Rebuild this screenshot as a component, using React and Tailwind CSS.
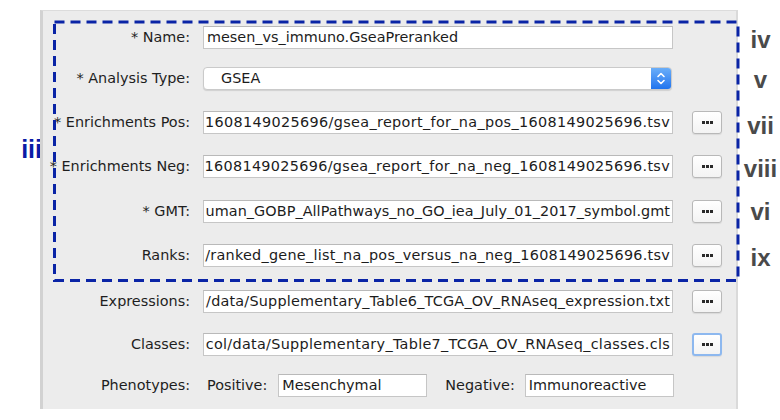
import React from 'react'

const FIELD_ROWS = [
  { label: '* Name:', value: 'mesen_vs_immuno.GseaPreranked', left: true, mt: 'mt-[15px]' },
  { label: '* Analysis Type:', select: 'GSEA', mt: 'mt-[18px]' },
  { label: '* Enrichments Pos:', value: '1608149025696/gsea_report_for_na_pos_1608149025696.tsv', track: 'tracking-[0.34px]', button: true, mt: 'mt-[21px]' },
  { label: '* Enrichments Neg:', value: '1608149025696/gsea_report_for_na_neg_1608149025696.tsv', track: 'tracking-[0.32px]', button: true, mt: 'mt-[21px]' },
  { label: '* GMT:', value: 'uman_GOBP_AllPathways_no_GO_iea_July_01_2017_symbol.gmt', track: 'tracking-[0.06px]', button: true, mt: 'mt-[22px]' },
  { label: 'Ranks:', value: '/ranked_gene_list_na_pos_versus_na_neg_1608149025696.tsv', track: 'tracking-[0.26px]', button: true, mt: 'mt-[21px]' },
  { label: 'Expressions:', value: '/data/Supplementary_Table6_TCGA_OV_RNAseq_expression.txt', track: 'tracking-[0.2px]', button: true, mt: 'mt-[23px]' },
  { label: 'Classes:', value: 'col/data/Supplementary_Table7_TCGA_OV_RNAseq_classes.cls', track: 'tracking-[0.3px]', button: true, focused: true, mt: 'mt-[20px]' },
]

const NUMERALS = [
  { text: 'iv', mt: 'mt-[25px]' },
  { text: 'v', mt: 'mt-[10px]' },
  { text: 'vii', mt: 'mt-[16px]' },
  { text: 'viii', mt: 'mt-[13px]' },
  { text: 'vi', mt: 'mt-[13px]' },
  { text: 'ix', mt: 'mt-[16px]' },
]

function DotsButton({ focused }) {
  return (
    <div
      className={
        'ml-[19px] w-[30px] h-[23px] rounded-[3px] bg-gradient-to-b from-white to-[#f3f3f3] flex items-center justify-center gap-[1px] shadow-[0_1px_1px_rgba(0,0,0,0.08)] ' +
        (focused ? 'border-2 border-[#8db8ef]' : 'border border-[#b8b8b8]')
      }
    >
      <span className="w-[3px] h-[3px] bg-[#2a2a2a]" />
      <span className="w-[3px] h-[3px] bg-[#2a2a2a]" />
      <span className="w-[3px] h-[3px] bg-[#2a2a2a]" />
    </div>
  )
}

function TextField({ value, left, track = '', width = 'w-[470px]' }) {
  return (
    <div
      className={
        width +
        ' h-[23px] bg-white border border-[#c6c6c6] border-t-[#b9b9b9] overflow-hidden flex items-center ' +
        (left ? 'justify-start pl-[3px]' : 'justify-end pr-[2px]')
      }
    >
      <span className={'shrink-0 whitespace-nowrap text-[#1c1c1c] ' + track}>{value}</span>
    </div>
  )
}

function Select({ value }) {
  return (
    <div className="w-[469px] h-[23px] rounded-[4px] bg-white border border-[#cacaca] shadow-[0_1px_1px_rgba(0,0,0,0.12)] flex items-center overflow-hidden">
      <span className="flex-1 pl-[17px] text-[#1c1c1c]">{value}</span>
      <div className="w-[20px] h-full bg-gradient-to-b from-[#6aaef9] to-[#1f74ee] flex items-center justify-center">
        <svg width="10" height="15" viewBox="0 0 10 15" fill="none" stroke="white" strokeWidth="1.6" strokeLinecap="round" strokeLinejoin="round">
          <path d="M2 5.5 L5 2.5 L8 5.5" />
          <path d="M2 9.5 L5 12.5 L8 9.5" />
        </svg>
      </div>
    </div>
  )
}

export default function App() {
  return (
    <div className="relative w-[780px] h-[420px] bg-white flex font-['DejaVu_Sans',sans-serif] text-[14.4px] text-[#1e1e1e]">
      {/* left annotation */}
      <div className="w-[40px] flex flex-col items-end">
        <span className="mt-[134px] mr-[-2px] font-['Liberation_Sans',sans-serif] font-bold text-[25px] leading-[30px] text-[#0a1ca6]">iii</span>
      </div>

      {/* form panel */}
      <div className="mt-[10px] w-[698px] h-[399px] bg-[#ececec] border-l-[3px] border-l-[#d2d2d2] border-t border-t-[#dcdcdc] border-r-[2px] border-r-[#dadada] flex flex-col">
        {FIELD_ROWS.map(row => (
          <div key={row.label} className={row.mt + ' h-[23px] flex items-center'}>
            <div className="w-[147px] text-right whitespace-nowrap">{row.label}</div>
            <div className="ml-[13px] flex items-center">
              {row.select ? <Select value={row.select} /> : <TextField value={row.value} left={row.left} track={row.track} />}
              {row.button && <DotsButton focused={row.focused} />}
            </div>
          </div>
        ))}

        {/* Phenotypes */}
        <div className="mt-[18px] h-[23px] flex items-center">
          <div className="w-[147px] text-right whitespace-nowrap">Phenotypes:</div>
          <span className="ml-[17px]">Positive:</span>
          <div className="ml-[11px]">
            <TextField value="Mesenchymal" left width="w-[149px]" />
          </div>
          <span className="ml-[18px]">Negative:</span>
          <div className="ml-[10px]">
            <TextField value="Immunoreactive" left width="w-[149px]" />
          </div>
        </div>
      </div>

      {/* right annotations */}
      <div className="flex-1 flex flex-col items-center pl-[3px] font-['Liberation_Sans',sans-serif] font-bold text-[24px] leading-[30px] text-[#4a4a4a]">
        {NUMERALS.map(n => (
          <span key={n.text} className={n.mt}>{n.text}</span>
        ))}
      </div>

      {/* dashed highlight box */}
      <svg className="absolute left-0 top-0 pointer-events-none" width="780" height="420">
        <rect x="54.5" y="22" width="683.5" height="258.5" fill="none" stroke="#0a24a6" strokeWidth="3" strokeDasharray="10 6" />
      </svg>
    </div>
  )
}
